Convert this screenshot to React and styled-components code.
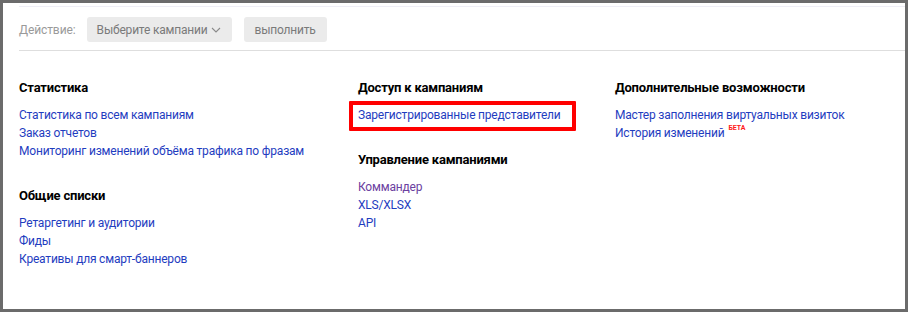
import React from 'react'
import styled, { createGlobalStyle } from 'styled-components'

const GlobalStyle = createGlobalStyle`
  html, body {
    margin: 0;
    padding: 0;
    background: #6b6b6b;
  }
  body {
    padding: 3px;
    font-family: Roboto, "Noto Sans", Arial, sans-serif;
  }
`

const Panel = styled.div`
  box-sizing: border-box;
  width: 902px;
  height: 306px;
  background: #fff;
  padding: 3px 0 0 16px;
`

const Toolbar = styled.div`
  display: flex;
  align-items: center;
  gap: 12px;
  border-top: 1px solid #eeeef6;
  border-bottom: 1px solid #dedede;
  padding: 10px 0 8px;
`

const Label = styled.span`
  font-size: 12px;
  letter-spacing: -0.1px;
  color: #9a9a9a;
  margin-right: -1px;
`

const GrayButton = styled.button`
  display: inline-flex;
  align-items: center;
  justify-content: center;
  gap: 4px;
  box-sizing: border-box;
  width: ${(p) => p.$width}px;
  height: 25px;
  padding: 0;
  border: none;
  border-radius: 3px;
  background: #ebebeb;
  color: #7a7a7a;
  font-family: inherit;
  font-size: 12px;
  letter-spacing: -0.2px;
`

const Columns = styled.div`
  display: grid;
  grid-template-columns: 339px 257px 1fr;
  padding-top: 28px;
`

const Column = styled.div`
  display: flex;
  flex-direction: column;
  gap: 27px;
`

const Group = styled.section`
  display: flex;
  flex-direction: column;
`

const Heading = styled.h3`
  margin: 0 0 9px;
  font-size: 13px;
  line-height: 18px;
  font-weight: 700;
  letter-spacing: -0.2px;
  color: #000;
`

const LinkList = styled.ul`
  list-style: none;
  margin: 0;
  padding: 0;
`

const Item = styled.li`
  position: relative;
  font-size: 12px;
  line-height: 18px;
  letter-spacing: -0.2px;
`

const Link = styled.a`
  color: ${(p) => (p.$visited ? '#6b40a0' : '#1f3dbf')};
  text-decoration: none;
`

const Highlight = styled.span`
  position: absolute;
  left: -9px;
  top: -5px;
  width: 227px;
  height: 30px;
  box-sizing: border-box;
  border: 4px solid #ff0000;
  border-radius: 1px;
  pointer-events: none;
`

const Beta = styled.sup`
  margin-left: 4px;
  font-size: 7px;
  font-weight: 700;
  letter-spacing: 0;
  color: #ff1a1a;
  vertical-align: 7px;
  line-height: 0;
`

const Chevron = () => (
  <svg width="10" height="6" viewBox="0 0 10 6" fill="none">
    <path d="M1 1l4 4 4-4" stroke="#8a8a8a" strokeWidth="1.1" />
  </svg>
)

const groups = [
  [
    {
      title: 'Статистика',
      links: [
        { text: 'Статистика по всем кампаниям' },
        { text: 'Заказ отчетов' },
        { text: 'Мониторинг изменений объёма трафика по фразам' },
      ],
    },
    {
      title: 'Общие списки',
      links: [
        { text: 'Ретаргетинг и аудитории' },
        { text: 'Фиды' },
        { text: 'Креативы для смарт-баннеров' },
      ],
    },
  ],
  [
    {
      title: 'Доступ к кампаниям',
      links: [{ text: 'Зарегистрированные представители', marked: true }],
    },
    {
      title: 'Управление кампаниями',
      links: [{ text: 'Коммандер', visited: true }, { text: 'XLS/XLSX' }, { text: 'API' }],
    },
  ],
  [
    {
      title: 'Дополнительные возможности',
      links: [
        { text: 'Мастер заполнения виртуальных визиток' },
        { text: 'История изменений', beta: true },
      ],
    },
  ],
]

export default function App() {
  return (
    <>
      <GlobalStyle />
      <Panel>
        <Toolbar>
          <Label>Действие:</Label>
          <GrayButton $width={145}>
            Выберите кампании <Chevron />
          </GrayButton>
          <GrayButton $width={83}>выполнить</GrayButton>
        </Toolbar>
        <Columns>
          {groups.map((col, i) => (
            <Column key={i}>
              {col.map((g) => (
                <Group key={g.title}>
                  <Heading>{g.title}</Heading>
                  <LinkList>
                    {g.links.map((l) => (
                      <Item key={l.text}>
                        <Link href="#" $visited={l.visited}>
                          {l.text}
                        </Link>
                        {l.beta && <Beta>БЕТА</Beta>}
                        {l.marked && <Highlight />}
                      </Item>
                    ))}
                  </LinkList>
                </Group>
              ))}
            </Column>
          ))}
        </Columns>
      </Panel>
    </>
  )
}
